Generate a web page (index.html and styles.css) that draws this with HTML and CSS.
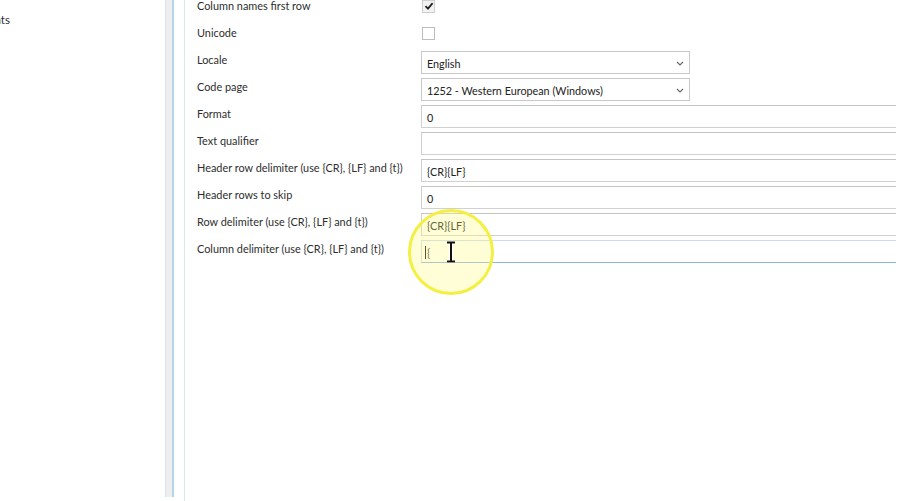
FILE: index.html
```html
<!DOCTYPE html>
<html>
<head>
<meta charset="utf-8">
<link rel="stylesheet" href="styles.css">
</head>
<body>
<div class="page">
  <aside class="nav">
    <div class="nav-item">Settings and arguments</div>
  </aside>
  <div class="splitter"></div>
  <main class="content">
    <div class="form">
      <div class="row">
        <label class="lbl">Column names first row</label>
        <div class="ctl"><span class="check checked"><svg viewBox="0 0 12 12" width="12" height="12"><path d="M2.5 6.2 L5 8.6 L9.6 3.2" fill="none" stroke="#222" stroke-width="1.8"/></svg></span></div>
      </div>
      <div class="row">
        <label class="lbl">Unicode</label>
        <div class="ctl"><span class="check"></span></div>
      </div>
      <div class="row">
        <label class="lbl">Locale</label>
        <div class="ctl"><div class="select">English<svg class="chev" viewBox="0 0 8 5" width="8" height="5"><path d="M1 1 L4 4 L7 1" fill="none" stroke="#666" stroke-width="1.1"/></svg></div></div>
      </div>
      <div class="row">
        <label class="lbl">Code page</label>
        <div class="ctl"><div class="select">1252 - Western European (Windows)<svg class="chev" viewBox="0 0 8 5" width="8" height="5"><path d="M1 1 L4 4 L7 1" fill="none" stroke="#666" stroke-width="1.1"/></svg></div></div>
      </div>
      <div class="row">
        <label class="lbl">Format</label>
        <div class="ctl"><div class="input">0</div></div>
      </div>
      <div class="row">
        <label class="lbl">Text qualifier</label>
        <div class="ctl"><div class="input"></div></div>
      </div>
      <div class="row">
        <label class="lbl">Header row delimiter (use {CR}, {LF} and {t})</label>
        <div class="ctl"><div class="input">{CR}{LF}</div></div>
      </div>
      <div class="row">
        <label class="lbl">Header rows to skip</label>
        <div class="ctl"><div class="input">0</div></div>
      </div>
      <div class="row">
        <label class="lbl">Row delimiter (use {CR}, {LF} and {t})</label>
        <div class="ctl"><div class="input">{CR}{LF}</div></div>
      </div>
      <div class="row">
        <label class="lbl">Column delimiter (use {CR}, {LF} and {t})</label>
        <div class="ctl"><div class="input focused"><span class="typed">{</span><span class="caret"></span>
          <div class="spot"></div>
          <svg class="ibeam" viewBox="0 0 12 22" width="12" height="22"><path d="M2 1.5 H10 M6 1.5 V20.5 M2 20.5 H10" fill="none" stroke="#fff" stroke-width="4"/><path d="M2 1.5 H10 M6 1.5 V20.5 M2 20.5 H10" fill="none" stroke="#111" stroke-width="2"/></svg>
        </div></div>
      </div>
    </div>
  </main>
</div>
</body>
</html>
```

FILE: styles.css
```css
html, body {
  margin: 0;
  padding: 0;
  background: #fff;
}
body {
  width: 900px;
  height: 501px;
  overflow: hidden;
  font-family: Lato, "Open Sans", "DejaVu Sans", sans-serif;
  font-size: 11px;
  color: #2e2e2e;
}
.page {
  display: flex;
  height: 501px;
  width: 896px;
  overflow: hidden;
}
.nav {
  width: 165px;
  flex: none;
  overflow: hidden;
  position: relative;
}
.nav-item {
  white-space: nowrap;
  margin-top: 12px;
  margin-left: -108px;
  line-height: 16px;
  font-size: 11.5px;
}
.splitter {
  flex: none;
  width: 6px;
  background: #eeeeee;
  border-left: 1px solid #d3e6f1;
  border-right: 2px solid #b3d5e8;
  height: 497px;
}
.content {
  flex: 1;
  margin-left: 10px;
  border-left: 1px solid #d8e5f5;
  overflow: hidden;
  position: relative;
}
.form {
  margin-top: -3px;
  padding-left: 12px;
}
.row {
  display: grid;
  grid-template-columns: 224px 1fr;
  height: 27px;
}
.lbl {
  padding-top: 1px;
  line-height: 16px;
  white-space: nowrap;
  font-size: 10.9px;
}
.ctl {
  position: relative;
  min-width: 0;
}
.check {
  display: block;
  width: 11px;
  height: 11px;
  border: 1px solid #bdbdbd;
  margin-top: 3px;
  margin-left: 1px;
  background: #fff;
  position: relative;
}
.check svg {
  position: absolute;
  left: 0;
  top: -1px;
}
.check.checked {
  background: #f2f2f2;
  border-color: #cfcfcf;
}
.select {
  width: 262px;
  height: 21px;
  border: 1px solid #c8c8c8;
  padding-left: 5px;
  line-height: 23px;
  font-size: 10.8px;
  color: #222;
  position: relative;
  white-space: nowrap;
}
.chev {
  position: absolute;
  right: 5px;
  top: 9px;
}
.input {
  height: 21px;
  border: 1px solid #d0d0d0;
  border-top-color: #c4c4c4;
  border-right: none;
  padding-left: 5px;
  line-height: 23px;
  font-size: 10.8px;
  color: #222;
  margin-right: -20px;
  position: relative;
}
.input.focused {
  border-color: #c9dcf2;
  border-bottom-color: #89b4e6;
}
.typed {
  color: #444;
}
.caret {
  display: inline-block;
  width: 1px;
  height: 13px;
  background: #111;
  vertical-align: -2px;
  margin-left: -5px;
}
.spot {
  position: absolute;
  left: -14px;
  top: -32px;
  width: 80px;
  height: 80px;
  border-radius: 50%;
  border: 3px solid #f4ef45;
  background: rgba(255, 252, 120, 0.3);
  pointer-events: none;
}
.ibeam {
  position: absolute;
  left: 23px;
  top: 0px;
}
```
